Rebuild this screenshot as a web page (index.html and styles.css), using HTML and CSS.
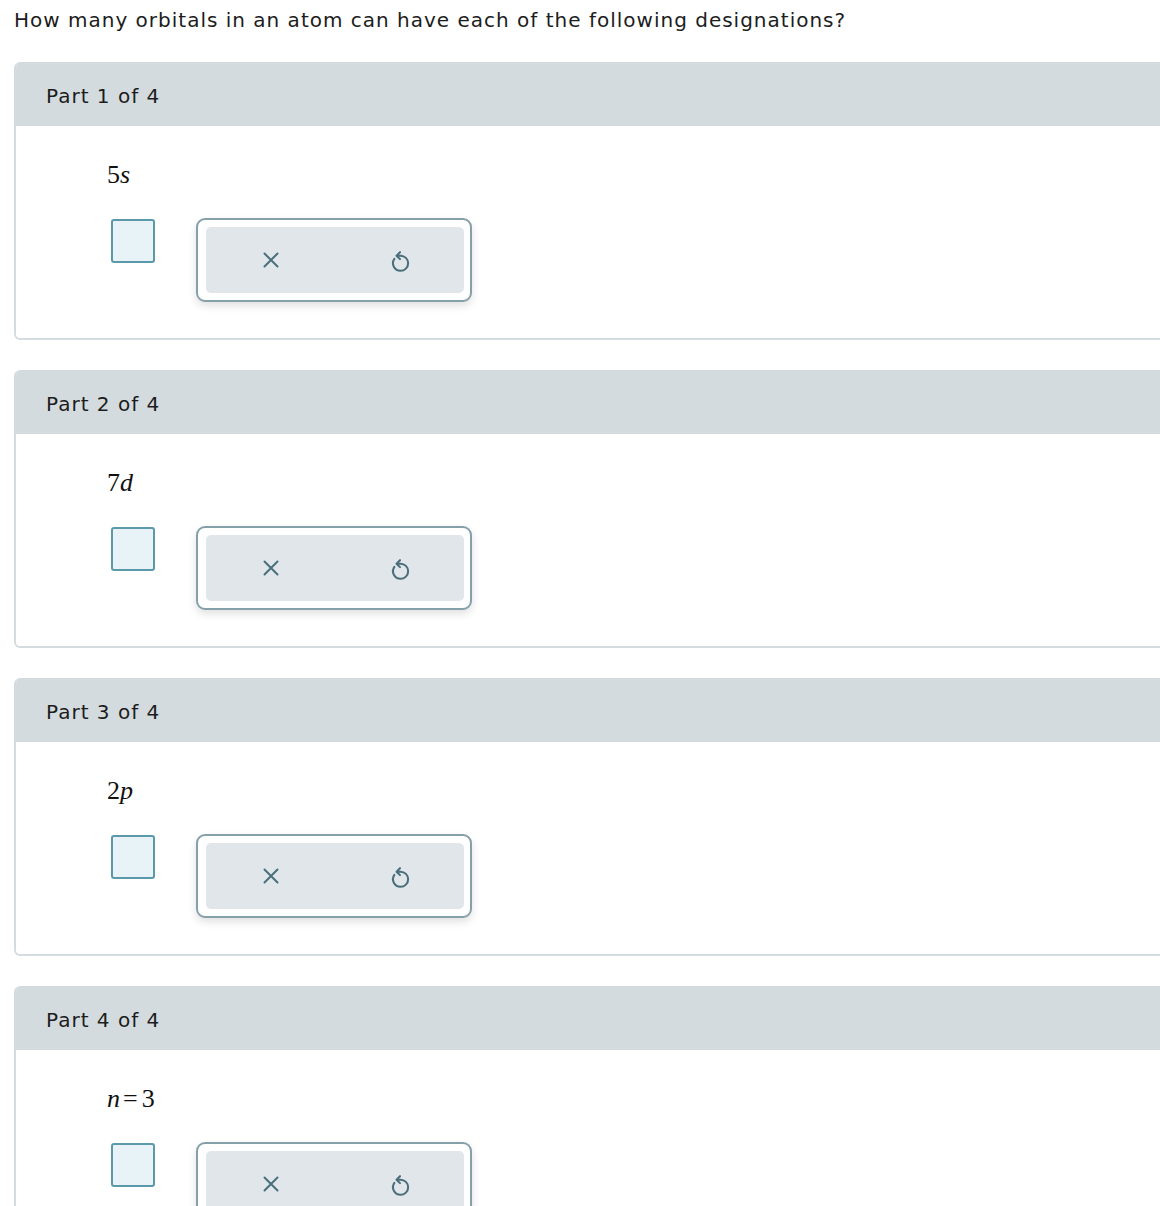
FILE: index.html
```html
<!DOCTYPE html>
<html>
<head>
<meta charset="utf-8">
<link rel="stylesheet" href="styles.css">
</head>
<body>
<p class="question">How many orbitals in an atom can have each of the following designations?</p>

<section class="card">
  <div class="card-head">Part 1 of 4</div>
  <div class="card-body">
    <div class="math">5<i>s</i></div>
    <div class="answer-row">
      <div class="input-box"></div>
      <div class="tools">
        <div class="tools-inner">
          <span class="tool-btn"><svg width="20" height="20" viewBox="0 0 20 20"><path d="M3.5 3.5 L16.5 16.5 M16.5 3.5 L3.5 16.5" stroke="#4a6e7a" stroke-width="2" stroke-linecap="round" fill="none"/></svg></span>
          <span class="tool-btn"><svg class="undo" width="26" height="26" viewBox="0 0 24 24"><path d="M6.8 11 A7 7 0 0 0 12.5 22 A7 7 0 0 0 19.5 15 A7 7 0 0 0 12.5 8 L9 8 M12 4.8 L8.8 8 L12 11.2" stroke="#4a6e7a" stroke-width="1.9" stroke-linecap="round" stroke-linejoin="round" fill="none"/></svg></span>
        </div>
      </div>
    </div>
  </div>
</section>

<section class="card">
  <div class="card-head">Part 2 of 4</div>
  <div class="card-body">
    <div class="math">7<i>d</i></div>
    <div class="answer-row">
      <div class="input-box"></div>
      <div class="tools">
        <div class="tools-inner">
          <span class="tool-btn"><svg width="20" height="20" viewBox="0 0 20 20"><path d="M3.5 3.5 L16.5 16.5 M16.5 3.5 L3.5 16.5" stroke="#4a6e7a" stroke-width="2" stroke-linecap="round" fill="none"/></svg></span>
          <span class="tool-btn"><svg class="undo" width="26" height="26" viewBox="0 0 24 24"><path d="M6.8 11 A7 7 0 0 0 12.5 22 A7 7 0 0 0 19.5 15 A7 7 0 0 0 12.5 8 L9 8 M12 4.8 L8.8 8 L12 11.2" stroke="#4a6e7a" stroke-width="1.9" stroke-linecap="round" stroke-linejoin="round" fill="none"/></svg></span>
        </div>
      </div>
    </div>
  </div>
</section>

<section class="card">
  <div class="card-head">Part 3 of 4</div>
  <div class="card-body">
    <div class="math">2<i>p</i></div>
    <div class="answer-row">
      <div class="input-box"></div>
      <div class="tools">
        <div class="tools-inner">
          <span class="tool-btn"><svg width="20" height="20" viewBox="0 0 20 20"><path d="M3.5 3.5 L16.5 16.5 M16.5 3.5 L3.5 16.5" stroke="#4a6e7a" stroke-width="2" stroke-linecap="round" fill="none"/></svg></span>
          <span class="tool-btn"><svg class="undo" width="26" height="26" viewBox="0 0 24 24"><path d="M6.8 11 A7 7 0 0 0 12.5 22 A7 7 0 0 0 19.5 15 A7 7 0 0 0 12.5 8 L9 8 M12 4.8 L8.8 8 L12 11.2" stroke="#4a6e7a" stroke-width="1.9" stroke-linecap="round" stroke-linejoin="round" fill="none"/></svg></span>
        </div>
      </div>
    </div>
  </div>
</section>

<section class="card">
  <div class="card-head">Part 4 of 4</div>
  <div class="card-body">
    <div class="math"><i>n</i><span class="eq">=</span>3</div>
    <div class="answer-row">
      <div class="input-box"></div>
      <div class="tools">
        <div class="tools-inner">
          <span class="tool-btn"><svg width="20" height="20" viewBox="0 0 20 20"><path d="M3.5 3.5 L16.5 16.5 M16.5 3.5 L3.5 16.5" stroke="#4a6e7a" stroke-width="2" stroke-linecap="round" fill="none"/></svg></span>
          <span class="tool-btn"><svg class="undo" width="26" height="26" viewBox="0 0 24 24"><path d="M6.8 11 A7 7 0 0 0 12.5 22 A7 7 0 0 0 19.5 15 A7 7 0 0 0 12.5 8 L9 8 M12 4.8 L8.8 8 L12 11.2" stroke="#4a6e7a" stroke-width="1.9" stroke-linecap="round" stroke-linejoin="round" fill="none"/></svg></span>
        </div>
      </div>
    </div>
  </div>
</section>
</body>
</html>
```

FILE: styles.css
```css
html, body {
  margin: 0;
  padding: 0;
  background: #ffffff;
  overflow-x: hidden;
}
body {
  padding: 0 0 0 14px;
  font-family: "DejaVu Sans", Verdana, sans-serif;
  color: #1c1c1c;
}
.question {
  margin: 0;
  padding-top: 6px;
  font-size: 20px;
  letter-spacing: 1px;
  line-height: 28px;
  height: 56px;
}
.card {
  margin-right: -40px;
  margin-bottom: 30px;
  border: 2px solid #d5dcdf;
  border-top: none;
  border-radius: 6px;
  overflow: hidden;
}
.card-head {
  height: 61px;
  padding-top: 3px;
  background: #d3dbde;
  display: flex;
  align-items: center;
  padding-left: 30px;
  font-size: 20px;
  letter-spacing: 1px;
}
.card-body {
  padding: 34px 0 36px 91px;
}
.math {
  font-family: "Liberation Serif", "Times New Roman", serif;
  font-size: 26px;
  line-height: 30px;
  height: 30px;
  color: #111;
}
.math i {
  font-style: italic;
}
.math .eq {
  margin: 0 4px 0 3px;
}
.answer-row {
  display: flex;
  align-items: flex-start;
  margin-top: 28px;
}
.input-box {
  width: 40px;
  height: 40px;
  margin-left: 4px;
  margin-top: 1px;
  border: 2px solid #5a98aa;
  border-radius: 3px;
  background: #e7f3f6;
}
.tools {
  margin-left: 41px;
  padding: 7px 6px 7px 8px;
  border: 2px solid #86a0a9;
  border-radius: 9px;
  background: #fff;
  box-shadow: 0 4px 8px rgba(0, 0, 0, 0.12);
}
.tools-inner {
  display: flex;
  height: 66px;
  width: 258px;
  background: #e0e6e9;
  border-radius: 5px;
}
.tool-btn {
  flex: 1;
  display: flex;
  align-items: center;
  justify-content: center;
}
.undo {
  margin-top: -1px;
}
```
